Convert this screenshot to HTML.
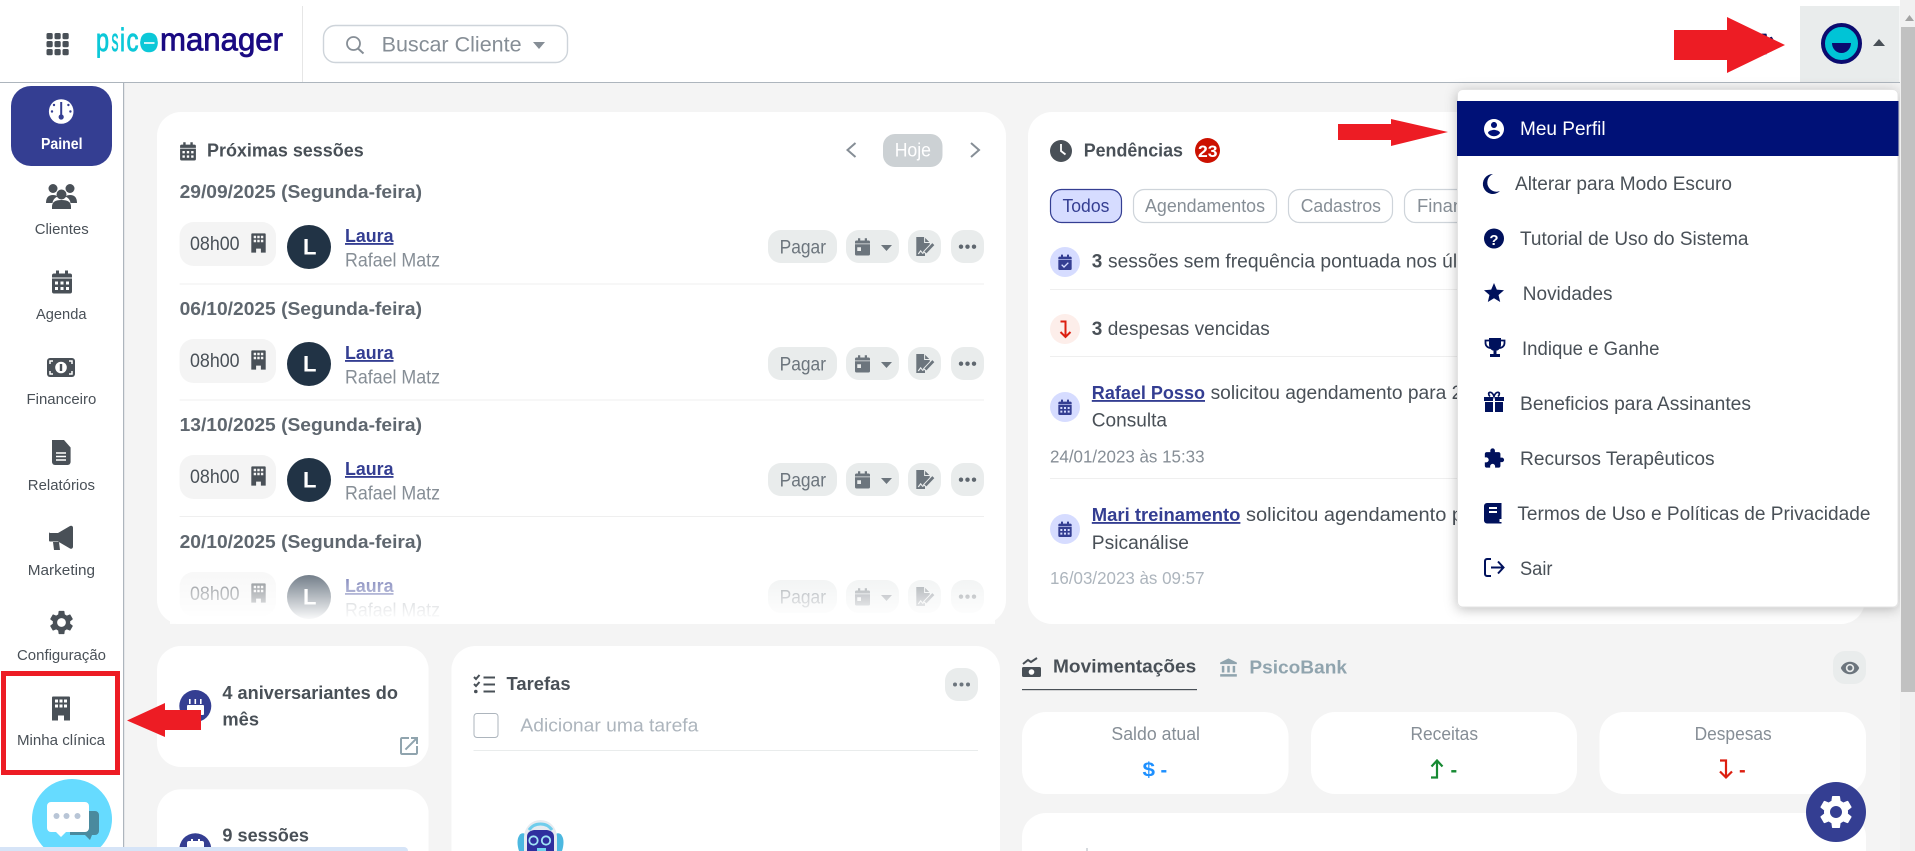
<!DOCTYPE html>
<html lang="pt-BR">
<head>
<meta charset="utf-8">
<title>PsicoManager - Painel</title>
<style>
html,body{margin:0;padding:0;width:1915px;height:851px;overflow:hidden;background:#f4f4f4}
svg{display:block}
text{font-family:"Liberation Sans",Arial,sans-serif;white-space:pre}
.nav{font-size:15px;fill:#495057;text-anchor:start}
.tb{font-size:18.5px;font-weight:700;fill:#495057}
.dt{font-size:18.5px;font-weight:700;fill:#5f676f}
.n{font-size:19px;fill:#495057}
.g{font-size:19px;fill:#868e96}
.lk{font-size:18.5px;font-weight:700;fill:#343e92;text-decoration:underline}
.btn{font-size:19px;fill:#6c757d}
.m{font-size:19px;fill:#495057}
.tab{font-size:18px;fill:#868e96}
.ts{font-size:17.5px;fill:#868e96}
.lb{font-size:18px;fill:#868e96}
.logo{font-size:32px;stroke-linejoin:round}
</style>
</head>
<body>
<svg xmlns="http://www.w3.org/2000/svg" width="1915" height="851" viewBox="0 0 1915 851">
<defs>
<symbol id="cal" viewBox="0 0 24 24"><path fill-rule="evenodd" d="M2 9h20v13a2 2 0 0 1-2 2H4a2 2 0 0 1-2-2zM5 12v3h3v-3zM10.5 12v3h3v-3zM16 12v3h3v-3zM5 17.5v3h3v-3zM10.5 17.5v3h3v-3zM16 17.5v3h3v-3z"/><path d="M4 4h2V1h3v3h6V1h3v3h2a2 2 0 0 1 2 2v2H2V6a2 2 0 0 1 2-2z"/></symbol>
<symbol id="cal2" viewBox="0 0 24 24"><path fill-rule="evenodd" d="M2 9h20v13a2 2 0 0 1-2 2H4a2 2 0 0 1-2-2zM5 13v5h5v-5z"/><path d="M4 4h2V1h3v3h6V1h3v3h2a2 2 0 0 1 2 2v2H2V6a2 2 0 0 1 2-2z"/></symbol>
<symbol id="calc" viewBox="0 0 24 24"><path d="M2 9h20v13a2 2 0 0 1-2 2H4a2 2 0 0 1-2-2z"/><path d="M4 4h2V1h3v3h6V1h3v3h2a2 2 0 0 1 2 2v2H2V6a2 2 0 0 1 2-2z"/><path d="M7 16l3.5 3.5L17 13" fill="none" stroke="#d6dcff" stroke-width="2"/></symbol>
<symbol id="bld" viewBox="0 0 20 24"><path fill-rule="evenodd" d="M2 0h16a1 1 0 0 1 1 1v23h-6v-5H7v5H1V1a1 1 0 0 1 1-1zM4 3v3h3V3zM8.5 3v3h3V3zM13 3v3h3V3zM4 8v3h3V8zM8.5 8v3h3V8zM13 8v3h3V8z"/></symbol>
<symbol id="gear" viewBox="0 0 24 24"><path d="M19.14 12.94c.04-.3.06-.61.06-.94 0-.32-.02-.64-.07-.94l2.03-1.58a.49.49 0 0 0 .12-.61l-1.92-3.32a.488.488 0 0 0-.59-.22l-2.39.96c-.5-.38-1.03-.7-1.62-.94l-.36-2.54a.484.484 0 0 0-.48-.41h-3.84c-.24 0-.43.17-.47.41l-.36 2.54c-.59.24-1.13.57-1.62.94l-2.39-.96c-.22-.08-.47 0-.59.22L2.74 8.87c-.12.21-.08.47.12.61l2.03 1.58c-.05.3-.09.63-.09.94s.02.64.07.94l-2.03 1.58a.49.49 0 0 0-.12.61l1.92 3.32c.12.22.37.29.59.22l2.39-.96c.5.38 1.03.7 1.62.94l.36 2.54c.05.24.24.41.48.41h3.84c.24 0 .44-.17.47-.41l.36-2.54c.59-.24 1.13-.56 1.62-.94l2.39.96c.22.08.47 0 .59-.22l1.92-3.32c.12-.22.07-.47-.12-.61l-2.01-1.58zM12 15.6c-1.98 0-3.6-1.62-3.6-3.6s1.62-3.6 3.6-3.6 3.6 1.62 3.6 3.6-1.62 3.6-3.6 3.6z"/></symbol>
<symbol id="sign" viewBox="0 0 24 24"><path d="M1 0h10l7 7v7l-6 6v4H1z"/><path d="M11.500 0v7h7" fill="none" stroke="#e9ecec" stroke-width="1.300"/><path d="M3.500 21.500l3-4 2.500 3 3.500-2" fill="none" stroke="#e9ecec" stroke-width="1.500"/><path d="M11.500 20.500L22.500 9" fill="none" stroke="#e9ecec" stroke-width="6"/><path d="M12.500 19.500L22.500 9" fill="none" stroke="#6c757d" stroke-width="3.500"/></symbol>
<symbol id="ext" viewBox="0 0 24 24"><path d="M19 19H5V5h7V3H5c-1.11 0-2 .9-2 2v14c0 1.1.89 2 2 2h14c1.1 0 2-.9 2-2v-7h-2v7zM14 3v2h3.59l-9.83 9.83 1.41 1.41L19 6.41V10h2V3h-7z"/></symbol>
<symbol id="eye" viewBox="0 0 24 24"><path d="M12 4.5C7 4.5 2.73 7.61 1 12c1.73 4.39 6 7.5 11 7.5s9.27-3.11 11-7.5c-1.73-4.39-6-7.5-11-7.5zM12 17c-2.76 0-5-2.24-5-5s2.24-5 5-5 5 2.24 5 5-2.24 5-5 5zm0-8c-1.66 0-3 1.34-3 3s1.34 3 3 3 3-1.34 3-3-1.34-3-3-3z"/></symbol>
<symbol id="bank" viewBox="0 0 24 24"><path d="M4 10v8h3v-8H4zm6.5 0v8h3v-8h-3zM2 20v3h20v-3H2zm15-10v8h3v-8h-3zM12 1L2 6v2h20V6L12 1z"/></symbol>
<symbol id="user" viewBox="0 0 24 24"><path d="M12 2C6.48 2 2 6.48 2 12s4.48 10 10 10 10-4.48 10-10S17.52 2 12 2zm0 3c1.66 0 3 1.34 3 3s-1.34 3-3 3-3-1.34-3-3 1.34-3 3-3zm0 14.2c-2.5 0-4.71-1.28-6-3.22.03-1.99 4-3.08 6-3.08 1.99 0 5.97 1.09 6 3.08-1.29 1.94-3.5 3.22-6 3.22z"/></symbol>
<symbol id="star" viewBox="0 0 24 24"><path d="M12 17.27L18.18 21l-1.64-7.03L22 9.24l-7.19-.61L12 2 9.19 8.63 2 9.24l5.46 4.73L5.82 21z"/></symbol>
<symbol id="puz" viewBox="0 0 24 24"><path d="M20.5 11H19V7c0-1.1-.9-2-2-2h-4V3.5C13 2.12 11.88 1 10.5 1S8 2.12 8 3.5V5H4c-1.1 0-1.99.9-1.99 2v3.8H3.5c1.49 0 2.7 1.21 2.7 2.7s-1.21 2.7-2.7 2.7H2V20c0 1.1.9 2 2 2h3.8v-1.5c0-1.49 1.21-2.7 2.7-2.7 1.49 0 2.7 1.21 2.7 2.7V22H17c1.1 0 2-.9 2-2v-4h1.5c1.38 0 2.5-1.12 2.5-2.5S21.88 11 20.5 11z"/></symbol>
<linearGradient id="fd1" gradientUnits="userSpaceOnUse" x1="0" y1="548" x2="0" y2="618"><stop offset="0" stop-color="#fff" stop-opacity="0"/><stop offset="1" stop-color="#fff" stop-opacity=".96"/></linearGradient>
<filter id="sh" x="-10%" y="-10%" width="120%" height="120%"><feDropShadow dx="0" dy="2" stdDeviation="6" flood-color="#000" flood-opacity=".25"/></filter>
</defs>

<rect width="1915" height="851" fill="#f4f4f4"/>

<!-- cabeçalho -->
<rect width="1900" height="82" fill="#fff"/>
<rect x="0" y="82" width="1900" height="1" fill="#adb5bd"/>
<rect x="302" y="6" width="1" height="76" fill="#e6e6e6"/>
<g fill="#495057">
<rect x="46.5" y="33" width="6.2" height="6.2" rx="1.6"/><rect x="54.5" y="33" width="6.2" height="6.2" rx="1.6"/><rect x="62.5" y="33" width="6.2" height="6.2" rx="1.6"/>
<rect x="46.5" y="41" width="6.2" height="6.2" rx="1.6"/><rect x="54.5" y="41" width="6.2" height="6.2" rx="1.6"/><rect x="62.5" y="41" width="6.2" height="6.2" rx="1.6"/>
<rect x="46.5" y="49" width="6.2" height="6.2" rx="1.6"/><rect x="54.5" y="49" width="6.2" height="6.2" rx="1.6"/><rect x="62.5" y="49" width="6.2" height="6.2" rx="1.6"/>
</g>
<g fill="#0cc8d8" stroke="#0cc8d8">
<text class="logo" x="96" y="51" textLength="13" lengthAdjust="spacingAndGlyphs" stroke-width=".9">p</text>
<text class="logo" x="111.500" y="51" textLength="7" lengthAdjust="spacingAndGlyphs" stroke-width=".7">s</text>
<text class="logo" x="120" y="51" textLength="5" lengthAdjust="spacingAndGlyphs" stroke-width=".9">i</text>
<text class="logo" x="126.500" y="51" textLength="12" lengthAdjust="spacingAndGlyphs" stroke-width=".9">c</text>
<text class="logo" x="140" y="51" textLength="18" lengthAdjust="spacingAndGlyphs" stroke-width="2">o</text>
</g>
<circle cx="149" cy="43" r="8.800" fill="#0cc8d8"/>
<rect x="144" y="42.200" width="10.500" height="1.600" fill="#fff"/>
<text class="logo" x="160" y="50.500" textLength="123" lengthAdjust="spacingAndGlyphs" fill="#1a0a82" stroke="#1a0a82" stroke-width=".8">manager</text>
<rect x="323.5" y="25.5" width="244" height="37" rx="12" fill="#fff" stroke="#ced4da" stroke-width="1.4"/>
<circle cx="353.5" cy="43.5" r="6.5" fill="none" stroke="#868e96" stroke-width="1.8"/><path d="M358 48.5l5.5 5" stroke="#868e96" stroke-width="2" fill="none"/>
<text x="381.6" y="51.7" font-size="21" textLength="140" lengthAdjust="spacingAndGlyphs" fill="#868e96">Buscar Cliente</text>
<path d="M533 42h12l-6 7z" fill="#868e96"/>
<use href="#gear" x="1751" y="31" width="26" height="26" fill="#0b1160"/>
<rect x="1800" y="6" width="99.5" height="76" fill="#e9ecec"/>
<circle cx="1841.5" cy="43.5" r="18.5" fill="#00c4d6" stroke="#0b0b6f" stroke-width="4"/>
<path d="M1832 43h19a9.5 10 0 0 1-19 0z" fill="#0b0b6f"/>
<path d="M1873 46l6-7 6 7z" fill="#495057"/>

<!-- barra lateral -->
<rect x="0" y="83" width="123" height="768" fill="#fff"/>
<rect x="123" y="83" width="1.2" height="768" fill="#adb5bd"/>
<rect x="11" y="86" width="101" height="80" rx="20" fill="#343e92"/>
<circle cx="61.2" cy="111.5" r="12.3" fill="#fff"/>
<g fill="#343e92"><rect x="60.2" y="102" width="2" height="15"/><circle cx="61.2" cy="117" r="2.6"/><circle cx="54" cy="105" r="1.2"/><circle cx="68.4" cy="105" r="1.2"/><circle cx="52" cy="111.5" r="1.2"/><circle cx="70.4" cy="111.5" r="1.2"/></g>
<text x="41" y="149" font-size="15.5" font-weight="700" fill="#fff" textLength="41.5" lengthAdjust="spacingAndGlyphs">Painel</text>
<g fill="#495057">
<circle cx="53" cy="188.5" r="4.5"/><circle cx="70" cy="188.5" r="4.5"/><circle cx="61.5" cy="194.5" r="5"/>
<path d="M46 203q0-8 7-8 3 0 4.5 1.500-4.500 2-5 6.500zM77 203q0-8-7-8-3 0-4.500 1.500 4.500 2 5 6.500zM52 209v-2.500q0-6.500 9.500-6.500t9.500 6.500v2.500z"/>
<use href="#cal" x="50" y="269" width="24" height="25"/>
<rect x="47" y="358" width="28" height="19" rx="3"/>
<path d="M52 440h12l6.600 7.500V462a3 3 0 0 1-3 3H55a3 3 0 0 1-3-3z"/>
<path d="M50 533h8l12-7a2 2 0 0 1 3 1.500v19.500a2 2 0 0 1-3 1.500l-12-7h-8a1 1 0 0 1-1-1v-7a1 1 0 0 1 1-1zM53 542h6l1 8h-6z"/>
<use href="#gear" x="47" y="608" width="29" height="29"/>
<use href="#bld" x="51" y="696" width="20" height="25"/>
</g>
<circle cx="61" cy="367.500" r="5.800" fill="#fff"/><rect x="59.800" y="364" width="2.400" height="7" fill="#495057"/>
<path d="M50 364v-3h3M72 364v-3h-3M50 371v3h3M72 371v3h-3" fill="none" stroke="#fff" stroke-width="1.500"/>
<path d="M56 453h10M56 456.500h10M56 460h10" stroke="#fff" stroke-width="1.500"/>
<text class="nav" x="34.700" y="234" textLength="54" lengthAdjust="spacingAndGlyphs">Clientes</text>
<text class="nav" x="36" y="319" textLength="50.500" lengthAdjust="spacingAndGlyphs">Agenda</text>
<text class="nav" x="26.500" y="404" textLength="69.800" lengthAdjust="spacingAndGlyphs">Financeiro</text>
<text class="nav" x="27.800" y="490" textLength="67.200" lengthAdjust="spacingAndGlyphs">Relatórios</text>
<text class="nav" x="27.800" y="575" textLength="67.200" lengthAdjust="spacingAndGlyphs">Marketing</text>
<text class="nav" x="17" y="660" textLength="89" lengthAdjust="spacingAndGlyphs">Configuração</text>
<text class="nav" x="17" y="745" textLength="88" lengthAdjust="spacingAndGlyphs">Minha clínica</text>
<rect x="3.500" y="673.500" width="114" height="99" fill="none" stroke="#ed1c24" stroke-width="5"/>
<path d="M48 851A40 40 0 1 1 96 851z" fill="#66dbff"/>
<path d="M70 811h25a4 4 0 0 1 4 4v16a4 4 0 0 1-4 4h-3l-2 5-5-5H70z" fill="#4a8a9e"/>
<path d="M51 802h34a4 4 0 0 1 4 4v22a4 4 0 0 1-4 4H66l-5 5-5-5h-5a4 4 0 0 1-4-4v-22a4 4 0 0 1 4-4z" fill="#fff"/>
<g fill="#b8c5d6"><circle cx="56.500" cy="816" r="3"/><circle cx="66.500" cy="816" r="3"/><circle cx="77.500" cy="816" r="3"/></g>

<!-- Próximas sessões -->
<rect x="157" y="112" width="849" height="512" rx="24" fill="#fff"/>
<use href="#cal" x="178.500" y="141" width="19" height="20" fill="#495057"/>
<text class="tb" x="207" y="156.700" textLength="156.700" lengthAdjust="spacingAndGlyphs">Próximas sessões</text>
<path d="M855.500 143l-8 7 8 7" fill="none" stroke="#868e96" stroke-width="2"/>
<rect x="883" y="134" width="59.500" height="33" rx="12" fill="#ccd1d4"/>
<text x="894.700" y="156.700" font-size="19" fill="#fff" textLength="36.300" lengthAdjust="spacingAndGlyphs">Hoje</text>
<path d="M971 143l8 7-8 7" fill="none" stroke="#868e96" stroke-width="2"/>

<g>
<text class="dt" x="179.600" y="198" textLength="242.400" lengthAdjust="spacingAndGlyphs">29/09/2025 (Segunda-feira)</text>
<rect x="179.600" y="222" width="96.400" height="44" rx="14" fill="#f4f4f4"/>
<text class="n" x="190" y="250" textLength="49.600" lengthAdjust="spacingAndGlyphs">08h00</text>
<use href="#bld" x="250.500" y="233" width="16" height="20" fill="#495057"/>
<circle cx="309" cy="247" r="22" fill="#213345"/>
<text x="303" y="254.500" font-size="22" font-weight="700" fill="#fff">L</text>
<text class="lk" x="345" y="242" textLength="48.500" lengthAdjust="spacingAndGlyphs">Laura</text>
<text class="g" x="345" y="266.700" textLength="95" lengthAdjust="spacingAndGlyphs">Rafael Matz</text>
<rect x="768" y="230" width="69" height="33" rx="13" fill="#e9ecec"/>
<text class="btn" x="779.600" y="253.300" textLength="46.400" lengthAdjust="spacingAndGlyphs">Pagar</text>
<rect x="846" y="230" width="53" height="33" rx="13" fill="#e9ecec"/>
<use href="#cal2" x="853.500" y="237" width="18" height="19" fill="#6c757d"/>
<path d="M881 245h11l-5.500 6z" fill="#6c757d"/>
<rect x="908" y="230" width="33" height="33" rx="13" fill="#e9ecec"/>
<use href="#sign" x="915.500" y="237" width="19" height="19" fill="#6c757d"/>
<rect x="951" y="230" width="33" height="33" rx="13" fill="#e9ecec"/>
<g fill="#5f676f"><circle cx="961" cy="246.700" r="2.200"/><circle cx="967.500" cy="246.700" r="2.200"/><circle cx="974" cy="246.700" r="2.200"/></g>
<rect x="179.600" y="283.500" width="804.400" height="1" fill="#efefef"/>
</g>
<g transform="translate(0,117)">
<text class="dt" x="179.600" y="198" textLength="242.400" lengthAdjust="spacingAndGlyphs">06/10/2025 (Segunda-feira)</text>
<rect x="179.600" y="222" width="96.400" height="44" rx="14" fill="#f4f4f4"/>
<text class="n" x="190" y="250" textLength="49.600" lengthAdjust="spacingAndGlyphs">08h00</text>
<use href="#bld" x="250.500" y="233" width="16" height="20" fill="#495057"/>
<circle cx="309" cy="247" r="22" fill="#213345"/>
<text x="303" y="254.500" font-size="22" font-weight="700" fill="#fff">L</text>
<text class="lk" x="345" y="242" textLength="48.500" lengthAdjust="spacingAndGlyphs">Laura</text>
<text class="g" x="345" y="266.700" textLength="95" lengthAdjust="spacingAndGlyphs">Rafael Matz</text>
<rect x="768" y="230" width="69" height="33" rx="13" fill="#e9ecec"/>
<text class="btn" x="779.600" y="253.300" textLength="46.400" lengthAdjust="spacingAndGlyphs">Pagar</text>
<rect x="846" y="230" width="53" height="33" rx="13" fill="#e9ecec"/>
<use href="#cal2" x="853.500" y="237" width="18" height="19" fill="#6c757d"/>
<path d="M881 245h11l-5.500 6z" fill="#6c757d"/>
<rect x="908" y="230" width="33" height="33" rx="13" fill="#e9ecec"/>
<use href="#sign" x="915.500" y="237" width="19" height="19" fill="#6c757d"/>
<rect x="951" y="230" width="33" height="33" rx="13" fill="#e9ecec"/>
<g fill="#5f676f"><circle cx="961" cy="246.700" r="2.200"/><circle cx="967.500" cy="246.700" r="2.200"/><circle cx="974" cy="246.700" r="2.200"/></g>
<rect x="179.600" y="282.500" width="804.400" height="1" fill="#efefef"/>
</g>
<g transform="translate(0,233)">
<text class="dt" x="179.600" y="198" textLength="242.400" lengthAdjust="spacingAndGlyphs">13/10/2025 (Segunda-feira)</text>
<rect x="179.600" y="222" width="96.400" height="44" rx="14" fill="#f4f4f4"/>
<text class="n" x="190" y="250" textLength="49.600" lengthAdjust="spacingAndGlyphs">08h00</text>
<use href="#bld" x="250.500" y="233" width="16" height="20" fill="#495057"/>
<circle cx="309" cy="247" r="22" fill="#213345"/>
<text x="303" y="254.500" font-size="22" font-weight="700" fill="#fff">L</text>
<text class="lk" x="345" y="242" textLength="48.500" lengthAdjust="spacingAndGlyphs">Laura</text>
<text class="g" x="345" y="266.700" textLength="95" lengthAdjust="spacingAndGlyphs">Rafael Matz</text>
<rect x="768" y="230" width="69" height="33" rx="13" fill="#e9ecec"/>
<text class="btn" x="779.600" y="253.300" textLength="46.400" lengthAdjust="spacingAndGlyphs">Pagar</text>
<rect x="846" y="230" width="53" height="33" rx="13" fill="#e9ecec"/>
<use href="#cal2" x="853.500" y="237" width="18" height="19" fill="#6c757d"/>
<path d="M881 245h11l-5.500 6z" fill="#6c757d"/>
<rect x="908" y="230" width="33" height="33" rx="13" fill="#e9ecec"/>
<use href="#sign" x="915.500" y="237" width="19" height="19" fill="#6c757d"/>
<rect x="951" y="230" width="33" height="33" rx="13" fill="#e9ecec"/>
<g fill="#5f676f"><circle cx="961" cy="246.700" r="2.200"/><circle cx="967.500" cy="246.700" r="2.200"/><circle cx="974" cy="246.700" r="2.200"/></g>
<rect x="179.600" y="283" width="804.400" height="1" fill="#efefef"/>
</g>
<g transform="translate(0,350)">
<text class="dt" x="179.600" y="198" textLength="242.400" lengthAdjust="spacingAndGlyphs">20/10/2025 (Segunda-feira)</text>
<rect x="179.600" y="222" width="96.400" height="44" rx="14" fill="#f4f4f4"/>
<text class="n" x="190" y="250" textLength="49.600" lengthAdjust="spacingAndGlyphs">08h00</text>
<use href="#bld" x="250.500" y="233" width="16" height="20" fill="#495057"/>
<circle cx="309" cy="247" r="22" fill="#213345"/>
<text x="303" y="254.500" font-size="22" font-weight="700" fill="#fff">L</text>
<text class="lk" x="345" y="242" textLength="48.500" lengthAdjust="spacingAndGlyphs">Laura</text>
<text class="g" x="345" y="266.700" textLength="95" lengthAdjust="spacingAndGlyphs">Rafael Matz</text>
<rect x="768" y="230" width="69" height="33" rx="13" fill="#e9ecec"/>
<text class="btn" x="779.600" y="253.300" textLength="46.400" lengthAdjust="spacingAndGlyphs">Pagar</text>
<rect x="846" y="230" width="53" height="33" rx="13" fill="#e9ecec"/>
<use href="#cal2" x="853.500" y="237" width="18" height="19" fill="#6c757d"/>
<path d="M881 245h11l-5.500 6z" fill="#6c757d"/>
<rect x="908" y="230" width="33" height="33" rx="13" fill="#e9ecec"/>
<use href="#sign" x="915.500" y="237" width="19" height="19" fill="#6c757d"/>
<rect x="951" y="230" width="33" height="33" rx="13" fill="#e9ecec"/>
<g fill="#5f676f"><circle cx="961" cy="246.700" r="2.200"/><circle cx="967.500" cy="246.700" r="2.200"/><circle cx="974" cy="246.700" r="2.200"/></g>
</g>
<rect x="170" y="548" width="825" height="76" fill="url(#fd1)"/>

<!-- Pendências -->
<rect x="1028" y="112" width="837" height="512" rx="24" fill="#fff"/>
<circle cx="1061" cy="151" r="11" fill="#495057"/><path d="M1061 144v7l4.500 3.500" fill="none" stroke="#fff" stroke-width="1.800"/>
<text class="tb" x="1083.700" y="156.700" textLength="99.300" lengthAdjust="spacingAndGlyphs">Pendências</text>
<ellipse cx="1207.500" cy="150.500" rx="12.500" ry="12.500" fill="#cc1100"/>
<text x="1198" y="157" font-size="17" font-weight="700" fill="#fff" textLength="19.500" lengthAdjust="spacingAndGlyphs">23</text>
<rect x="1050.500" y="189.500" width="71" height="33" rx="11" fill="#d6dcff" stroke="#343e92" stroke-width="1.200"/>
<text class="tab" style="fill:#343e92" x="1062.500" y="212" textLength="46.900" lengthAdjust="spacingAndGlyphs">Todos</text>
<rect x="1133.500" y="189.500" width="143" height="33" rx="11" fill="#fff" stroke="#ced4da" stroke-width="1.200"/>
<text class="tab" x="1145" y="212" textLength="120" lengthAdjust="spacingAndGlyphs">Agendamentos</text>
<rect x="1288.500" y="189.500" width="104" height="33" rx="11" fill="#fff" stroke="#ced4da" stroke-width="1.200"/>
<text class="tab" x="1300.700" y="212" textLength="80.300" lengthAdjust="spacingAndGlyphs">Cadastros</text>
<rect x="1404.500" y="189.500" width="110" height="33" rx="11" fill="#fff" stroke="#ced4da" stroke-width="1.200"/>
<text class="tab" x="1417" y="212" textLength="86" lengthAdjust="spacingAndGlyphs">Financeiro</text>

<circle cx="1065" cy="262" r="15" fill="#d6dcff"/>
<use href="#calc" x="1057" y="253" width="16" height="18" fill="#343e92"/>
<text x="1091.800" y="267.700" font-size="19" font-weight="700" fill="#495057">3</text>
<text class="n" x="1108" y="267.700" textLength="395" lengthAdjust="spacingAndGlyphs">sessões sem frequência pontuada nos últimos</text>
<rect x="1050" y="289" width="800" height="1" fill="#efefef"/>

<circle cx="1065" cy="329" r="15" fill="#fdeeea"/>
<path d="M1060.500 321.500h5v15M1060.500 332l5 5 5-5" fill="none" stroke="#dc1f10" stroke-width="2"/>
<text x="1091.800" y="335" font-size="19" font-weight="700" fill="#495057">3</text>
<text class="n" x="1107.800" y="335" textLength="162" lengthAdjust="spacingAndGlyphs">despesas vencidas</text>
<rect x="1050" y="356" width="800" height="1" fill="#efefef"/>

<circle cx="1065" cy="407" r="15" fill="#d6dcff"/>
<use href="#cal" x="1057" y="398" width="16" height="18" fill="#343e92"/>
<text class="lk" x="1091.800" y="399" textLength="113.200" lengthAdjust="spacingAndGlyphs">Rafael Posso</text>
<text class="n" x="1210.600" y="399" textLength="337" lengthAdjust="spacingAndGlyphs">solicitou agendamento para 25/01/2023</text>
<text class="n" x="1091.800" y="426.700" textLength="75.200" lengthAdjust="spacingAndGlyphs">Consulta</text>
<text class="ts" x="1050" y="462.300" textLength="154.500" lengthAdjust="spacingAndGlyphs">24/01/2023 às 15:33</text>
<rect x="1050" y="478" width="800" height="1" fill="#efefef"/>

<circle cx="1065" cy="529" r="15" fill="#d6dcff"/>
<use href="#cal" x="1057" y="520" width="16" height="18" fill="#343e92"/>
<text class="lk" x="1091.800" y="521" textLength="148.600" lengthAdjust="spacingAndGlyphs">Mari treinamento</text>
<text class="n" x="1246" y="521" textLength="246" lengthAdjust="spacingAndGlyphs">solicitou agendamento para</text>
<text class="n" x="1091.800" y="549" textLength="97.200" lengthAdjust="spacingAndGlyphs">Psicanálise</text>
<text class="ts" style="fill:#adb5bd" x="1050" y="584" textLength="154.500" lengthAdjust="spacingAndGlyphs">16/03/2023 às 09:57</text>

<!-- Aniversariantes -->
<rect x="157" y="646" width="271.600" height="121" rx="24" fill="#fff"/>
<circle cx="195.300" cy="706" r="16" fill="#343e92"/>
<g fill="#fff"><rect x="187" y="705" width="17" height="10" rx="1"/><rect x="189" y="699" width="1.600" height="5"/><rect x="194.500" y="699" width="1.600" height="5"/><rect x="200" y="699" width="1.600" height="5"/></g>
<text class="tb" x="222.400" y="699" textLength="175.600" lengthAdjust="spacingAndGlyphs">4 aniversariantes do</text>
<text class="tb" x="222.400" y="725.700" textLength="36.600" lengthAdjust="spacingAndGlyphs">mês</text>
<use href="#ext" x="397" y="734" width="24" height="24" fill="#90a4ae"/>
<path d="M157 851V813.300a24 24 0 0 1 24-24H404.600a24 24 0 0 1 24 24V851z" fill="#fff"/>
<path d="M179.400 851A16 16 0 1 1 211.200 851z" fill="#343e92"/>
<path d="M189 841h2v-2h2v2h5v-2h2v2h2a2 2 0 0 1 2 2v8h-17v-8a2 2 0 0 1 2-2z" fill="#fff"/>
<text class="tb" x="222.400" y="841.700" textLength="86.600" lengthAdjust="spacingAndGlyphs">9 sessões</text>

<!-- Tarefas -->
<path d="M451.400 851V670a24 24 0 0 1 24-24H976a24 24 0 0 1 24 24V851z" fill="#fff"/>
<g fill="none" stroke="#495057" stroke-width="2"><path d="M474 677l2 2 3.500-4M474 684l2 2 3.500-4"/><path d="M483.500 677.500H495M483.500 684.500H495M483.500 691.500H495"/></g><circle cx="475.800" cy="691.500" r="1.800" fill="#495057"/>
<text class="tb" x="506.500" y="690" textLength="64.100" lengthAdjust="spacingAndGlyphs">Tarefas</text>
<rect x="945" y="668" width="33" height="33" rx="13" fill="#e9ecec"/>
<g fill="#6c757d"><circle cx="955" cy="684.500" r="2"/><circle cx="961.500" cy="684.500" r="2"/><circle cx="968" cy="684.500" r="2"/></g>
<rect x="474" y="713.500" width="24" height="24" rx="3" fill="#fff" stroke="#adb5bd" stroke-width="1"/>
<text class="lb" style="fill:#adb5bd" x="520.400" y="731.700" textLength="178" lengthAdjust="spacingAndGlyphs">Adicionar uma tarefa</text>
<rect x="473.500" y="750" width="504.500" height="1" fill="#e9ecec"/>
<!-- robô -->
<path d="M519 851c-2-6-2-12 0-15a4 4 0 0 1 6-2v17zM562 851c2-6 2-12 0-15a4 4 0 0 0-6-2v17z" fill="#4cb8e0"/>
<path d="M524 851v-14a16.500 17 0 0 1 33 0v14z" fill="#e6ebf0"/>
<path d="M529 830a14 14 0 0 1 23 0" fill="none" stroke="#6fcdec" stroke-width="3"/>
<path d="M527 851v-14q0-6 7-7h13q7 1 7 7v14z" fill="#2f2e9e"/>
<circle cx="533.500" cy="840.500" r="4.200" fill="none" stroke="#9fe3f5" stroke-width="1.800"/><circle cx="546" cy="840.500" r="4.200" fill="none" stroke="#9fe3f5" stroke-width="1.800"/>
<path d="M537 851v-3h9v3z" fill="#6fd3ee"/>

<!-- Movimentações -->
<g fill="#495057"><rect x="1022" y="667" width="19" height="10" rx="1.500"/><path d="M1023 664l5-4 3 2 6-4" fill="none" stroke="#495057" stroke-width="2"/></g><circle cx="1031.500" cy="672" r="2.800" fill="#fff"/>
<text class="tb" x="1053" y="672.700" textLength="143.300" lengthAdjust="spacingAndGlyphs">Movimentações</text>
<rect x="1022" y="689" width="175" height="1.200" fill="#495057"/>
<use href="#bank" x="1218.500" y="657.500" width="20" height="20" fill="#90a4ae"/>
<text class="tb" style="fill:#90a4ae" x="1249.400" y="673.300" textLength="97.600" lengthAdjust="spacingAndGlyphs">PsicoBank</text>
<rect x="1833" y="651" width="33" height="33" rx="12" fill="#e9ecec"/>
<use href="#eye" x="1840" y="658" width="20" height="20" fill="#6c757d"/>

<rect x="1022" y="712" width="266.500" height="82" rx="24" fill="#fff"/>
<text class="lb" x="1111.400" y="740" textLength="88.600" lengthAdjust="spacingAndGlyphs">Saldo atual</text>
<text x="1142.500" y="776.700" font-size="20" font-weight="700" fill="#1e90ff" textLength="12.500" lengthAdjust="spacingAndGlyphs">$</text>
<text x="1160.500" y="776.700" font-size="20" font-weight="700" fill="#1e90ff">-</text>
<rect x="1311" y="712" width="266" height="82" rx="24" fill="#fff"/>
<text class="lb" x="1410.500" y="740" textLength="67.500" lengthAdjust="spacingAndGlyphs">Receitas</text>
<path d="M1431 777.500h6V761M1431.500 766.500l5.500-6 5.500 6" fill="none" stroke="#178a33" stroke-width="2.200"/>
<text x="1450.500" y="776.700" font-size="20" font-weight="700" fill="#178a33">-</text>
<rect x="1599.500" y="712" width="266.500" height="82" rx="24" fill="#fff"/>
<text class="lb" x="1694.600" y="740" textLength="77.100" lengthAdjust="spacingAndGlyphs">Despesas</text>
<path d="M1720 760.500h6V777M1720 771.500l6 6 6-6" fill="none" stroke="#dc1f10" stroke-width="2.200"/>
<text x="1739" y="776.700" font-size="20" font-weight="700" fill="#dc1f10">-</text>
<path d="M1022 851V837a24 24 0 0 1 24-24H1842a24 24 0 0 1 24 24V851z" fill="#fff"/>
<rect x="1086.500" y="848" width="1" height="3" fill="#adb5bd"/>

<!-- menu suspenso -->
<rect x="1457.500" y="89.500" width="440.500" height="517.500" rx="5" fill="#fff" stroke="#e3e3e3" stroke-width="1" filter="url(#sh)"/>
<rect x="1457" y="101" width="441.500" height="55" fill="#001177"/>
<use href="#user" x="1482" y="117" width="24" height="24" fill="#fff"/>
<text class="m" style="fill:#fff" x="1520" y="135" textLength="85.600" lengthAdjust="spacingAndGlyphs">Meu Perfil</text>
<g fill="#00115c">
<path d="M1495 174a10 10 0 1 0 7 17 8.500 8.500 0 0 1-7-17z" transform="translate(-2,0)"/>
<circle cx="1494" cy="238.500" r="10"/>
<use href="#star" x="1482" y="281" width="24" height="24"/>
<path d="M1489 338h12v6.500a6 6.500 0 0 1-12 0zM1493.500 351h3v3h3.500v3h-10v-3h3.500z"/>
<path d="M1484 397h9v4h-9zM1495 397h9v4h-9zM1485 402h8v10h-8zM1495 402h8v10h-8z"/>
<use href="#puz" x="1483" y="447.500" width="22" height="22"/>
<path d="M1487 503h14.500v16h-2v3h2v1.500H1487a3 3 0 0 1-3-3V506a3 3 0 0 1 3-3z"/>
</g>
<path d="M1489 340.500h-3.500v2.500a5 5 0 0 0 5 5M1501 340.500h3.500v2.500a5 5 0 0 1-5 5" fill="none" stroke="#00115c" stroke-width="1.800"/>
<path d="M1490 396.500c-4-4 2-7 4 0 2-7 8-4 4 0" fill="none" stroke="#00115c" stroke-width="1.700"/>
<rect x="1489" y="507" width="8" height="2" fill="#fff"/><rect x="1489" y="511" width="8" height="2" fill="#fff"/>
<path d="M1491 559h-4a2 2 0 0 0-2 2v13a2 2 0 0 0 2 2h4M1491 567.500h12M1498 561.500l5.500 6-5.500 6" fill="none" stroke="#00115c" stroke-width="2"/>
<text x="1494" y="245" font-size="15" font-weight="700" fill="#fff" text-anchor="middle">?</text>
<text class="m" x="1515" y="190" textLength="217" lengthAdjust="spacingAndGlyphs">Alterar para Modo Escuro</text>
<text class="m" x="1520" y="245" textLength="228.500" lengthAdjust="spacingAndGlyphs">Tutorial de Uso do Sistema</text>
<text class="m" x="1522.800" y="300" textLength="89.700" lengthAdjust="spacingAndGlyphs">Novidades</text>
<text class="m" x="1522" y="355" textLength="137.500" lengthAdjust="spacingAndGlyphs">Indique e Ganhe</text>
<text class="m" x="1520" y="410" textLength="231" lengthAdjust="spacingAndGlyphs">Beneficios para Assinantes</text>
<text class="m" x="1520" y="465" textLength="194.600" lengthAdjust="spacingAndGlyphs">Recursos Terapêuticos</text>
<text class="m" x="1517.400" y="520" textLength="353.100" lengthAdjust="spacingAndGlyphs">Termos de Uso e Políticas de Privacidade</text>
<text class="m" x="1520" y="575" textLength="32.500" lengthAdjust="spacingAndGlyphs">Sair</text>

<!-- setas vermelhas -->
<path d="M1674 30h53V17l58 28-58 28V60h-53z" fill="#ed1c24"/>
<path d="M1338 124h53v-5l57 13-57 14v-6h-53z" fill="#ed1c24"/>
<path d="M127 720.500l38-17.500v7h36v20h-36v7z" fill="#ed1c24"/>

<!-- botão de configurações -->
<ellipse cx="1836" cy="812" rx="30" ry="30" fill="#343e92"/>
<use href="#gear" x="1816" y="792" width="40" height="40" fill="#fff"/>

<!-- barra inferior -->
<path d="M0 851v-4h404a4 4 0 0 1 4 4z" fill="#d6e4f7"/>

<!-- barra de rolagem -->
<rect x="1900" y="0" width="15" height="851" fill="#f1f1f1"/>
<rect x="1901" y="27" width="14" height="665" fill="#c1c1c1"/>
<path d="M1905 21l4.500-6 4.500 6z" fill="#a3a3a3"/>
</svg>
</body>
</html>
